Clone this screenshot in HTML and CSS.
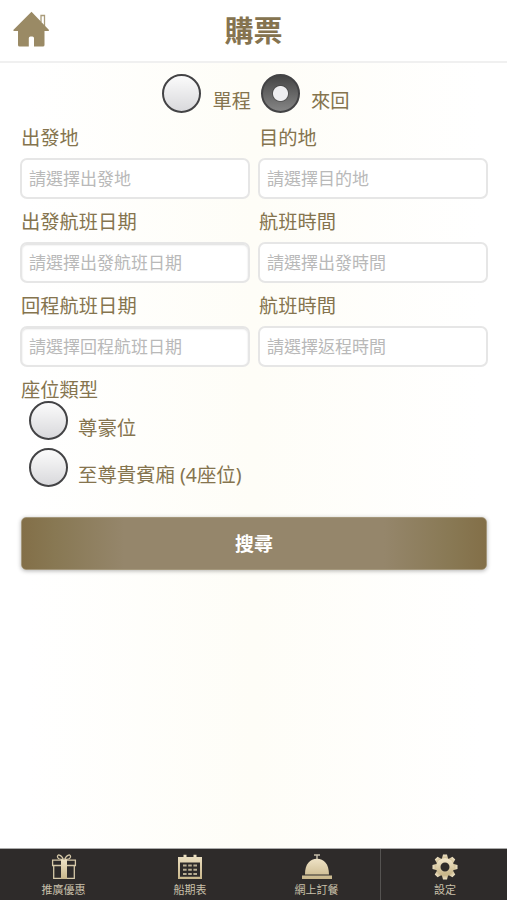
FILE: index.html
```html
<!DOCTYPE html>
<html lang="zh-Hant">
<head>
<meta charset="utf-8">
<title>購票</title>
<link rel="stylesheet" href="styles.css">
</head>
<body>
<div class="app">
  <header class="header">
    <a class="home" aria-label="主頁">
      <svg width="38" height="38" viewBox="0 0 38 38">
        <path d="M29 11V4.500h3.500V15" fill="none" stroke="#a99b7a" stroke-width="1.300"/>
        <path d="M19.500.7 37 19q.2 1-.8 1h-3.700V34q0 1.600-1.600 1.600H22V27q0-1.600-1.600-1.600h-2q-1.600 0-1.600 1.600v8.600H7.600Q6 35.600 6 34V20H2.300q-1.200 0-1-1z" fill="#9a8a65"/>
      </svg>
    </a>
    <h1 class="title">購票</h1>
  </header>
  <main class="main">
    <div class="trip">
      <label class="option"><span class="radio"></span><span class="option-text">單程</span></label>
      <label class="option"><span class="radio checked"></span><span class="option-text">來回</span></label>
    </div>
    <div class="fields">
      <div class="field"><div class="label">出發地</div><div class="input">請選擇出發地</div></div>
      <div class="field"><div class="label">目的地</div><div class="input">請選擇目的地</div></div>
      <div class="field"><div class="label">出發航班日期</div><div class="input inset">請選擇出發航班日期</div></div>
      <div class="field"><div class="label">航班時間</div><div class="input">請選擇出發時間</div></div>
      <div class="field"><div class="label">回程航班日期</div><div class="input inset">請選擇回程航班日期</div></div>
      <div class="field"><div class="label">航班時間</div><div class="input">請選擇返程時間</div></div>
    </div>
    <div class="label seat-label">座位類型</div>
    <div class="seats">
      <label class="option"><span class="radio"></span><span class="option-text">尊豪位</span></label>
      <label class="option"><span class="radio"></span><span class="option-text">至尊貴賓廂 (4座位)</span></label>
    </div>
    <button class="search">搜尋</button>
  </main>
  <nav class="tabs">
    <svg class="defs" width="0" height="0"><defs>
      <linearGradient id="gold" x1="0" y1="0" x2="0" y2="1"><stop offset="0" stop-color="#eee2c5"/><stop offset="1" stop-color="#c9b78b"/></linearGradient>
    </defs></svg>
    <a class="tab">
      <svg width="26" height="26" viewBox="0 0 26 26">
        <g fill="none" stroke="#d5c8a8" stroke-width="1.300">
          <path d="M12.500 5.500C10 0 6 0 6.500 3q.4 2.500 5.500 2.500M13.500 5.500C16 0 20 0 19.500 3q-.4 2.500-5.500 2.500"/>
          <path d="M1.600 6.200h22.800v5.300H1.600zM2.700 11.500h20.600v12.800H2.700z"/>
        </g>
        <rect x="10" y="5.600" width="6" height="19.400" fill="url(#gold)"/>
      </svg>
      <span>推廣優惠</span>
    </a>
    <a class="tab">
      <svg width="26" height="26" viewBox="0 0 26 26">
        <path fill="url(#gold)" fill-rule="evenodd" d="M1 3h5.500V.8h3V3h7V.8h3V3H25v22H1zM3 8.600v14.200h20V8.600z"/>
        <path d="M6 11.500h14M6 15.700h14M6 19.900h14" fill="none" stroke="#b9ae93" stroke-width="2" stroke-dasharray="3.600 1.600"/>
      </svg>
      <span>船期表</span>
    </a>
    <a class="tab">
      <svg width="32" height="26" viewBox="0 0 32 26">
        <path d="M13 1h6M16 1v4" stroke="#c5bda9" stroke-width="1.500"/>
        <path fill="url(#gold)" d="M4 20.400C4 10 9 4.800 16 4.800S28 10 28 20.400zM1 21.600h30V25H1z"/>
      </svg>
      <span>網上訂餐</span>
    </a>
    <a class="tab last">
      <svg width="26" height="26" viewBox="-13 -13 26 26">
        <g fill="url(#gold)">
          <path id="tooth" d="M-3.200-8-2-12.500h4L3.200-8z"/>
          <use href="#tooth" transform="rotate(45)"/><use href="#tooth" transform="rotate(90)"/><use href="#tooth" transform="rotate(135)"/><use href="#tooth" transform="rotate(180)"/><use href="#tooth" transform="rotate(225)"/><use href="#tooth" transform="rotate(270)"/><use href="#tooth" transform="rotate(315)"/>
        </g>
        <circle r="6.800" fill="none" stroke="url(#gold)" stroke-width="4.600"/>
      </svg>
      <span>設定</span>
    </a>
  </nav>
</div>
</body>
</html>
```

FILE: styles.css
```css
* { box-sizing: border-box; }

body {
  margin: 0;
  font-family: "Noto Sans", "Noto Sans CJK TC", sans-serif;
  color: #85744e;
}

.app {
  height: 900px;
  display: flex;
  flex-direction: column;
  background: linear-gradient(90deg, #fff 5%, #fefdf7 50%, #fff 95%);
}

.header {
  height: 63px;
  display: grid;
  grid-template-columns: 60px 1fr 60px;
  background: #fff;
  border-bottom: 2px solid #f0f0f0;
}

.home { padding: 11px 0 0 12px; }
.home svg { display: block; }

.title {
  margin: 0;
  text-align: center;
  font-size: 29px;
  line-height: 62px;
  height: 61px;
  font-weight: 700;
  color: #85734f;
}

.main { flex: 1; padding: 11px 20px 0; }

.trip {
  display: flex;
  justify-content: center;
  gap: 10px;
  padding-left: 5px;
}

.option { display: flex; gap: 10px; height: 40px; }

.option-text {
  font-size: 19.300px;
  line-height: 28px;
  margin-top: 13px;
  white-space: nowrap;
}

.radio {
  flex: none;
  width: 39px;
  height: 39px;
  margin-right: 1px;
  border-radius: 50%;
  border: 2px solid #434345;
  background: linear-gradient(#fbfbfb, #d9d9dc);
}

.radio.checked {
  background:
    radial-gradient(circle at 50% 50%, #eeeef0 0 7px, rgba(60, 60, 60, .5) 8px, transparent 9px),
    linear-gradient(#454545, #858585);
}

.fields {
  display: grid;
  grid-template-columns: 230px 230px;
  column-gap: 8px;
}

.field { height: 84px; }

.label {
  height: 44px;
  padding-left: 1px;
  font-size: 19.300px;
  line-height: 48px;
}

.input {
  height: 41px;
  padding-left: 7px;
  border: 2px solid #e6e6e6;
  border-radius: 7px;
  background: #fff;
  color: #b9b9b9;
  font-size: 17px;
  line-height: 37px;
}

.inset { box-shadow: inset 0 1px 2px #ddd; }

.seat-label { height: 35px; }

.seats {
  display: flex;
  flex-direction: column;
  gap: 7px;
  padding-left: 9px;
}

.seats .option { gap: 9px; }
.seats .option-text { font-size: 19.400px; }

.search {
  display: block;
  width: 466px;
  height: 53px;
  margin: 29px 0 0 1px;
  padding: 1px 0 0;
  border: 1px solid #a4977b;
  border-radius: 5px;
  background: linear-gradient(90deg, #836f48 0%, #887853 7%, #95866b 22%, #95866b 78%, #887853 93%, #836f48 100%);
  box-shadow: 0 1px 4px rgba(0, 0, 0, .3);
  color: #fff;
  font: 700 19px/28px "Noto Sans", "Noto Sans CJK TC", sans-serif;
}

.tabs {
  height: 52px;
  display: grid;
  grid-template-columns: 127px 126px 127px 1fr;
  background: #2e2b2a;
  border-top: 1px solid #aaa;
}

.defs { position: absolute; }

.tab {
  display: flex;
  flex-direction: column;
  align-items: center;
  padding-top: 5px;
  color: #c9c0aa;
  font-size: 11px;
  line-height: 16px;
}

.tab span { margin-top: 2px; }
.tab.last { border-left: 1px solid #555351; padding-left: 2px; }
```
